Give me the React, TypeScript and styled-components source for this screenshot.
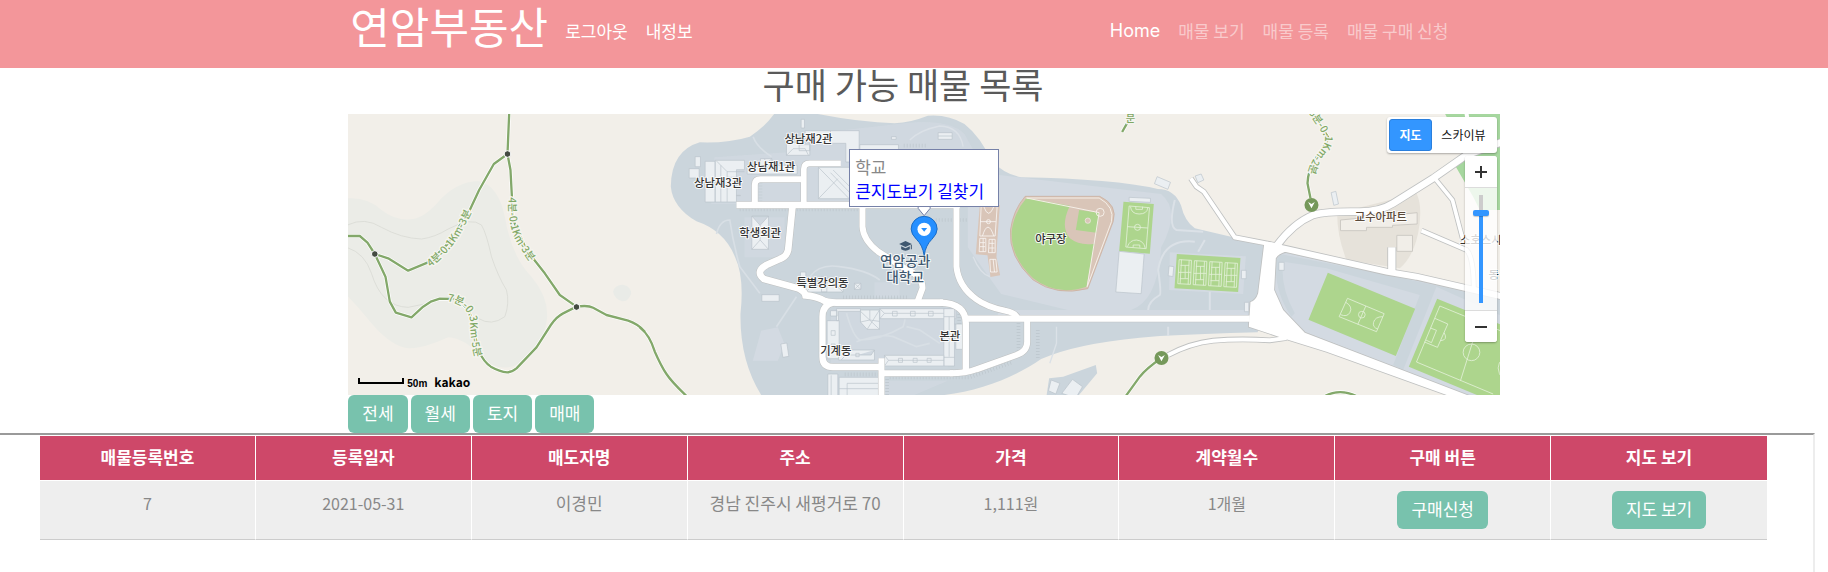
import React from 'react';
import styled, { createGlobalStyle } from 'styled-components';

const GlobalStyle = createGlobalStyle`
  *, *::before, *::after { box-sizing: border-box; }
  body {
    margin: 0;
    background: #fff;
    color: #888;
    font-family: "Noto Sans CJK KR", sans-serif;
    font-size: 17px;
    line-height: 24px;
  }
  a { text-decoration: none; }
  button { font-family: inherit; cursor: pointer; }
`;

const Page = styled.div`
  min-height: 100vh;
  display: flex;
  flex-direction: column;
`;

const Navbar = styled.nav`
  background: #f3969a;
  height: 68px;
  padding: 0 20% 0 19%;
`;

const NavInner = styled.div`
  display: flex;
  align-items: flex-start;
  padding: 0 5px 0 3px;
`;

const Brand = styled.a`
  color: #fff;
  font-size: 43px;
  line-height: 50px;
  margin-right: 8px;
`;

const NavList = styled.ul<{ $end?: boolean }>`
  list-style: none;
  display: flex;
  margin: 0 0 0 ${p => (p.$end ? 'auto' : '0')};
  padding: 19px 0 0;
`;

const NavLink = styled.a<{ $dim?: boolean; $latin?: boolean }>`
  display: block;
  padding: 0 9px;
  color: ${p => (p.$dim ? 'rgba(255, 255, 255, 0.5)' : '#fff')};
  font-family: ${p => (p.$latin ? 'Inter, sans-serif' : 'inherit')};
  font-size: ${p => (p.$latin ? 18 : 17)}px;
  white-space: nowrap;
`;

const Title = styled.h1`
  margin: 0;
  padding-right: 22px;
  height: 46px;
  text-align: center;
  color: #5a5a5a;
  font-size: 35px;
  font-weight: 400;
  line-height: 32px;
`;

const MapBox = styled.section`
  position: relative;
  margin-left: calc(19% + 1px);
  width: 63%;
  height: 281px;
  overflow: hidden;
  background: #f2efe9;
`;

const MapSvg = styled.svg`
  display: block;
  width: 100%;
  height: 100%;
`;

const MapText = styled.text<{ $tone: string; $big?: boolean }>`
  fill: ${p => p.$tone};
  stroke: rgba(255, 255, 255, 0.85);
  stroke-width: 6px;
  stroke-linejoin: round;
  paint-order: stroke;
  font-size: ${p => (p.$big ? 41 : 34)}px;
  font-weight: 500;
  text-anchor: middle;
`;

const TrailText = styled.text`
  fill: #7fa865;
  stroke: #f5f4ee;
  stroke-width: 8px;
  paint-order: stroke;
  font-size: 31px;
  font-weight: 500;
`;

const InfoWindow = styled.div`
  position: absolute;
  left: 50%;
  top: 35px;
  width: 150px;
  height: 58px;
  margin-left: -75px;
  padding: 5px;
  background: #fff;
  border: 1px solid #7681a8;
  white-space: nowrap;
  a { color: #00f; }
`;

const TypeSwitch = styled.div`
  position: absolute;
  right: 3px;
  top: 3px;
  display: flex;
  width: 110px;
  height: 36px;
  padding: 2px;
  background: #fff;
  border-radius: 3px;
  box-shadow: 0 1px 2px rgba(0, 0, 0, 0.3);
`;

const TypeButton = styled.button<{ $active?: boolean }>`
  flex: ${p => (p.$active ? '0 0 43px' : '1')};
  padding: 0;
  border: ${p => (p.$active ? '1px solid #2a7fdd' : '0')};
  border-radius: 3px;
  background: ${p => (p.$active ? '#3396ff' : '#fff')};
  color: ${p => (p.$active ? '#fff' : '#111')};
  font-size: 12px;
  line-height: 16px;
  font-weight: ${p => (p.$active ? 700 : 400)};
`;

const ZoomControl = styled.div`
  position: absolute;
  right: 3px;
  top: 42px;
  width: 32px;
  height: 186px;
  display: flex;
  flex-direction: column;
  border-radius: 3px;
  overflow: hidden;
  background: rgba(255, 255, 255, 0.8);
  box-shadow: 0 1px 2px rgba(0, 0, 0, 0.3);
`;

const ZoomButton = styled.button`
  height: 31px;
  padding: 0;
  border: 0;
  background: #fff;
  display: flex;
  align-items: center;
  justify-content: center;
`;

const ZoomTrack = styled.div`
  flex: 1;
  display: flex;
  justify-content: center;
  align-items: center;
  border: solid #dcdcdc;
  border-width: 1px 0;
`;

const ZoomRange = styled.input`
  appearance: none;
  writing-mode: vertical-lr;
  direction: rtl;
  width: 16px;
  height: 108px;
  margin: 0;
  background: linear-gradient(#ccc 18px, #3396ff 18px) center / 4px 100% no-repeat;
  &::-webkit-slider-thumb {
    appearance: none;
    width: 16px;
    height: 6px;
    border-radius: 2px;
    background: #3396ff;
    box-shadow: 0 1px 1px rgba(0, 0, 0, 0.2);
  }
`;

const MapCredit = styled.div`
  position: absolute;
  left: 10px;
  bottom: 4px;
  display: flex;
  align-items: flex-end;
  gap: 3px;
  color: #000;
  font-size: 12px;
  line-height: 18px;
  font-weight: 700;
`;

const ScaleBar = styled.span`
  width: 46px;
  height: 6px;
  margin-bottom: 7px;
  border: solid #000;
  border-width: 0 2px 2px;
`;

const ScaleText = styled.span`
  font-family: "Liberation Sans", sans-serif;
  font-size: 10px;
  line-height: 14px;
  margin-right: 4px;
`;

const Filters = styled.div`
  margin-left: calc(19% + 1px);
  display: flex;
  gap: 3px;
`;

const Button = styled.button`
  height: 38px;
  padding: 0 14px 2px;
  border: 0;
  border-radius: 6px;
  background: #78c2ad;
  color: #fff;
  font-size: 17px;
  line-height: 24px;
`;

const Frame = styled.main`
  flex: 1;
  margin-right: 13px;
  padding: 1px 46px 32px 40px;
  border: solid;
  border-width: 2px 2px 0 0;
  border-color: #9a9a9a #ededed;
`;

const Table = styled.table`
  width: 100%;
  table-layout: fixed;
  border-collapse: separate;
  border-spacing: 0;
  text-align: center;
  th, td { border-right: 1px solid #fff; }
  th:last-child, td:last-child { border-right: 0; }
`;

const HeadCell = styled.th`
  height: 45px;
  padding: 0 0 2px;
  background: #ce4869;
  border-bottom: 1px solid #fff;
  color: #fff;
  font-weight: 700;
`;

const Cell = styled.td<{ $numeric?: boolean }>`
  height: 59px;
  padding: 10px 0;
  vertical-align: top;
  background: #eee;
  border-bottom: 1px solid #ccc;
  font-size: ${p => (p.$numeric ? 16 : 17)}px;
`;

/* Map drawing: three units per screen pixel, split into tiles by origin. */
const TILE = {
  west: 'translate(-9 -12)',
  campus: 'translate(876 -12)',
  centre: 'translate(1476 -12)',
  sports: 'translate(2196 -12)',
  east: 'translate(2736 -12)',
};
type Tile = keyof typeof TILE;

const roads: [Tile, number, string][] = [
  ['campus', 20, 'M290 285H960'],
  ['campus', 18, 'M345 285V225Q345 208 362 208H490'],
  ['campus', 17, 'M603 160H510Q492 160 492 178V285'],
  ['campus', 20, 'M458 290L445 420Q440 440 420 447L380 465Q345 485 372 507L475 535Q495 545 497 556Q525 558 545 568Q560 578 590 578H910'],
  ['campus', 18, 'M668 290V350Q670 390 715 425L795 475Q850 500 848 535L832 578'],
  ['campus', 19, 'M580 578Q548 585 548 620V740Q548 771 580 771H725'],
  ['campus', 18, 'M725 745V860M725 790H940'],
  ['centre', 19, 'M300 578Q378 580 378 640V784'],
  ['centre', 18, 'M330 790Q380 790 410 778L530 735Q562 724 562 696V630'],
  ['centre', 18, 'M350 290V470Q356 530 410 568Q440 590 495 602Q528 608 534 626'],
  ['centre', 19, 'M380 626H1230'],
  ['sports', 12, 'M333 205L350 230L372 245L465 382L590 406'],
  ['sports', 12, 'M265 735Q330 700 400 692Q480 685 570 691L620 684'],
  ['east', 18, 'M20 404L70 415L380 485L470 500L730 560'],
  ['east', 20, 'M50 408Q100 340 160 315Q200 303 300 305Q360 305 400 280L520 205L620 135L730 95'],
  ['east', 11, 'M525 205L578 270L612 400'],
  ['east', 12, 'M485 362L620 420Q642 440 642 545'],
  ['east', 22, 'M396 412V490'],
];

const junction = 'M553 403L535 550Q528 572 512 576L507 650L605 683L740 725L1120 862L1180 862L675 668L610 600L583 540L588 445Q595 430 625 424Z';

const trails: [Tile, string][] = [
  ['west', 'M493 12L488 132L447 162L403 240L375 300L310 400L255 455L190 482L130 445L90 432'],
  ['west', 'M488 132L497 180L505 330L545 420L600 490L645 555L695 590'],
  ['west', 'M8 378H45L68 398L90 432L122 500L135 575L153 608L200 622L235 590L260 574L285 566L330 567Q380 590 390 660Q395 740 438 770Q465 785 487 787Q500 787 515 775L575 712L618 645Q635 620 655 610L695 590Q730 585 745 593L785 615L850 632Q880 642 900 665'],
  ['campus', 'M0 652Q30 675 45 725Q65 770 80 792Q95 815 140 858'],
  ['sports', 'M245 744Q200 775 180 800L138 858'],
  ['sports', 'M150 25L127 66'],
  ['east', 'M160 10L207 85L165 150Q145 180 143 220L152 265'],
  ['east', 'M195 858Q240 835 290 858'],
];

const halls: Record<'campus' | 'centre' | 'sports' | 'east', string[]> = {
  campus: [
    'M166 140h16v30h-16zM148 176h30v28h-30zM196 154h30v122h-30zM226 151h88v28h-24v78h12v-1h-12v20h-64z',
    'M228 151L262 185V276M243 166V276M262 202H290M262 185H314',
    'M484 28h10v26h-10zM440 98h70v38h-70zM496 62h162v94h-40v-56h-122zM572 62v38M478 104h32v18h-32zM440 136l20-20h36l10 20',
    'M322 166h150v26h-150zM362 146h34v26h-34zM372 146l24 22M396 146l-24 22M660 104h116v26h-116z',
    'M536 172h110v94h-110zM536 172l92 94M536 266l58-60M580 180l60 60M572 188l60 62',
    'M336 318h50v100h-50zM336 318l25 28l25-28M336 418l25-28l25 28M361 346v44',
    'M366 554h52v20h-52zM423 702l18-3l6 40l-18 3z',
    'M482 486h16v30h-16zM498 516h112v30h-112zM498 546l20-20h70l22 20M545 500h16v46h-16zM644 520h19v18h-19zM644 520l19 18M663 520l-19 18',
    'M572 602h20v16h-20zM590 596h72v8h-66v28h-6zM562 632h36v114h-36zM574 662h12v14h-12zM574 702h12v14h-12z',
    'M596 720h108v30h-108zM604 750l14-15h76l10-15M648 730h10v10h-10z',
    'M662 600h57v58h-37l-20-22zM662 604l57 54M719 600l-37 58M690 600v30M662 636l28-6l29 4',
    'M564 792h30v66h-30zM574 796v62M598 802h118v56h-118zM622 820h94M622 820v38M598 836h118',
  ],
  centre: [
    'M120 596h228v30h-228zM120 596l14 14l-14 16M134 610h180M158 604h14v14h-14zM212 604h14v14h-14zM266 604h14v14h-14z',
    'M312 596h32v172h-32zM344 642h24v76h-20v-76M312 620h32M312 742h32M328 620v120',
    'M134 736h178v32h-178zM134 736l12 15l-12 17M146 751h166M176 745h12v12h-12zM220 745h12v12h-12zM262 745h12v12h-12z',
    'M295 68h42v20h-42zM295 78h42M155 80h14v8h-14z',
    'M634 810l26 10l-12 32l-22-10zM698 808l30 22l-20 34l-42-14z',
  ],
  sports: [
    'M148 262l64 3v12l-64-3zM118 424l75 8l-9 119l-76-5z',
    'M268 468l14 2l-3 30l-14-3zM485 481h14v25h-14zM494 577h13v28h-13zM597 457h16v24h-16z',
    'M232 200l40 17l-8 21l-40-17zM346 198l18-6l8 18l-18 8z',
  ],
  east: ['M214 248l14-4l8 38l-14 4z'],
};

const hatches: [Tile, string][] = [
  ['campus', 'M300 298h360'],
  ['campus', 'M362 218v56'],
  ['campus', 'M610 562h198'],
  ['campus', 'M615 793h100'],
  ['campus', 'M742 808v50'],
  ['centre', 'M192 107h66'],
  ['centre', 'M288 330h98'],
  ['centre', 'M358 604v40'],
  ['centre', 'M536 640v86'],
  ['centre', 'M594 660v86'],
  ['centre', 'M150 802h240l130-46'],
];

const Marker = ({ x, y }: { x: number; y: number }) => (
  <g transform={`translate(${x} ${y})`}>
    <circle r="21" fill="#75985a" />
    <path d="M-10 -9L0 -3L10 -9L0 10Z" fill="#fff" />
  </g>
);

const CampusMap = () => (
  <MapSvg viewBox="0 0 3456 843" preserveAspectRatio="xMidYMid slice" role="img" aria-label="연암공과대학교 주변 지도">
    <rect x="-2000" width="8000" height="843" fill="#f2efe9" />
    <g transform={TILE.west}>
      <path fill="#ebece7" d="M-2000 265H10Q70 262 110 300Q150 332 200 328Q240 325 290 265Q340 215 400 213Q460 225 480 320Q500 440 560 500Q610 560 607 620Q600 700 540 750Q470 800 410 740Q360 685 310 682Q240 715 190 715Q140 710 80 640Q40 590 10 560H-2000Z" />
      <path fill="#e9ebe7" d="M805 545Q808 525 835 524Q860 530 859 552Q850 575 832 574Q808 565 805 545Z" />
      <path fill="none" stroke="#d5d6d0" strokeWidth="2" d="M8 345Q60 320 110 352Q170 385 230 387Q270 382 310 357Q380 320 410 345Q425 370 440 440Q460 500 485 540Q495 580 480 620Q440 650 400 625M8 413Q60 430 80 490Q110 590 190 592Q240 585 285 566" />
    </g>
    {/* campus grounds */}
    <path fill="#cbd5dc" d="M1279 0Q1250 40 1206 68Q1140 88 1056 85Q970 110 969 218Q975 280 1046 322Q1130 350 1162 430Q1190 490 1178 600Q1176 740 1240 843H1790C1900 830 2000 790 2080 735Q2180 690 2376 671L2436 666Q2560 660 2730 655L2750 395L2656 370L2541 343Q2510 320 2500 275Q2480 225 2430 225Q2300 195 2020 190Q1970 180 1930 140Q1900 70 1850 30Q1800 0 1740 5Q1690 25 1640 28Q1540 25 1410 0Z" />
    <g fill="#d3dae2">
      <path d="M1384 60L1650 30Q1800 10 1850 60L1900 150L1940 270H1384ZM1100 130L1384 110V270H1090Z" opacity="0.6" />
      <path d="M1930 180L2440 240Q2500 290 2440 400Q2430 560 2350 588H2160L1960 540L1860 400V260Z" />
      <path d="M2466 415L2694 427L2686 540L2464 528ZM2200 588H2700V604H1950V588ZM1240 650L1290 640L1310 690L1290 740L1215 740Z" />
      <path d="M1190 310H1310V430H1190ZM1580 505H1655V550H1580ZM1450 590H1800V760H1450ZM1590 800H1800L1700 843H1590Z" opacity="0.6" />
    </g>
    <g transform={TILE.campus} fill="none" stroke="#d8dfe5" strokeWidth="5">
      <path d="M230 372Q240 330 270 330Q280 400 300 470L360 550M470 560L410 650M510 500Q540 460 600 470Q680 480 720 510M340 80Q350 110 395 140" />
      <path d="M620 610Q640 680 660 690Q720 690 790 650Q800 620 795 600M800 650L840 660L900 700M650 695Q720 670 760 680L830 710L870 700" />
    </g>
    <g transform={TILE.sports} fill="none" stroke="#dbe1e7" strokeWidth="6">
      <path d="M285 270Q265 350 290 360L370 365M345 395Q250 385 235 480Q245 550 240 555Q205 575 205 600M390 545V600M375 390L355 425M265 650V678" />
    </g>
    <g transform={TILE.centre}>
      <path fill="#cbd5dc" d="M620 858L628 805L670 800L768 765L772 790L715 858Z" />
      <path fill="none" stroke="#dbe1e7" strokeWidth="4" d="M210 90Q240 60 300 48Q360 50 370 110M400 440Q420 490 450 500M650 650V700L630 760" />
    </g>
    <g transform={TILE.east}>
      <path fill="#a6d79f" d="M555 10H5000V300H660L640 260L585 165L615 130Z" />
      <path fill="none" stroke="#fff" strokeWidth="12" d="M620 10L640 130" />
      <path fill="#e6e2da" d="M232 310L470 250Q490 290 475 370Q460 440 420 475L260 450Q232 380 232 310Z" />
      <path fill="#d3dae2" stroke="#c3c7c8" strokeWidth="2" d="M46 440Q60 425 80 428L380 490L730 568V900L135 667Q40 580 43 530Z" />
      <path fill="#cbd5dc" d="M60 432L380 494L730 570V620L530 530L430 780L400 765L480 555L200 475L70 455Q60 530 105 610L95 620Q40 540 50 450Z" />
      <path fill="#f1eee8" stroke="#cdcac4" strokeWidth="3" d="M242 330L472 308V342L398 346V352H320V362H242ZM411 376H458V424H411Z" />
    </g>

    {/* playing fields */}
    <g transform={TILE.centre}>
      <path fill="#d9c5b8" d="M420 285H480L472 400L470 442L481 496L452 501L443 436L408 433Z" />
      <g fill="none" stroke="#fff" strokeWidth="2.5" opacity="0.85">
        <path d="M424 290H472L466 378H420ZM421 335H468M432 290Q446 330 462 290M428 378Q444 325 462 378M420 385h18v40h-20zM448 388h18v40h-20zM450 448h18l4 38h-20zM420 398h16M420 410h16M448 400h16M448 414h16M430 385v40M457 388v40M460 448l4 38" />
        <circle cx="446" cy="335" r="6" />
      </g>
      <path fill="#d9c5b8" stroke="#c9ab99" strokeWidth="2" d="M556 259H780Q835 285 820 335L744 536Q650 560 580 510Q505 440 512 360Q520 300 556 259Z" />
      <path fill="#add58d" d="M560 264L690 287Q660 350 690 385Q720 408 764 401L740 530Q650 560 580 505Q510 440 516 360Q524 305 560 264Z" />
      <path fill="#add58d" d="M718 300L778 308L770 368L708 360Z" />
      <g fill="none" stroke="#f5efe8" strokeWidth="3">
        <path d="M560 264H778Q825 290 815 335L742 530L778 308L560 264" />
        <circle cx="781" cy="307" r="12" />
      </g>
      <circle cx="744" cy="332" r="8" fill="#d9c5b8" stroke="#f5efe8" strokeWidth="2" />
    </g>
    <g transform={TILE.sports}>
      <path fill="#add58d" d="M131 275L222 282L210 431L118 423ZM291 432L482 444L475 546L284 535Z" />
      <g fill="none" stroke="#e3f0d8" strokeWidth="2.5">
        <path d="M148 288L209 293L199 416L138 411ZM143 350L204 354M152 290Q155 312 178 312Q202 312 204 293M143 410Q150 390 170 390Q192 392 196 414M168 290v8h20v-8M160 412v-7h20v8" />
        <circle cx="173" cy="352" r="9" />
        {[298, 344, 390, 436].map((x, i) => (
          <path key={x} transform={`translate(${x} ${449 + i * 3})`} d="M0 0L37 2L34 74L-4 72ZM7 0L3 72M30 2L27 74M4 17H30M-2 38H36M2 57H28M18 17V57" />
        ))}
      </g>
    </g>
    <g transform={TILE.east}>
      <path fill="#add58d" d="M204 488L466 596L408 738L146 629ZM532 566L1000 757V1000L447 770Z" />
      <g fill="none" stroke="#e3f0d8" strokeWidth="2.5">
        <path d="M263 565L373 611L350 665L238 620ZM318 588L294 643M258 577Q280 590 270 608Q262 622 242 614M369 620Q345 620 341 638Q338 652 354 657" />
        <circle cx="306" cy="614" r="10" />
        <path d="M540 588L800 694M540 588L470 756L700 852M525 625L564 642L533 712L494 696M512 654L530 661L515 698L498 690M553 668Q565 690 543 692M656 640L602 812M730 745Q700 770 730 810" />
        <circle cx="635" cy="727" r="25" />
      </g>
    </g>

    {(Object.keys(halls) as (keyof typeof halls)[]).map(tile => (
      <g key={tile} transform={TILE[tile]} fill="#ebeff2" stroke="#bac3ca" strokeWidth="2">
        {halls[tile].map(d => <path key={d} d={d} />)}
      </g>
    ))}
    {hatches.map(([tile, d]) => (
      <path key={tile + d} transform={TILE[tile]} d={d} fill="none" stroke="#bcc5cb" strokeWidth="11" strokeDasharray="2 7" />
    ))}

    {/* roads: casing first, then the surface */}
    <g fill="none" stroke="#bfc1c1">
      {roads.map(([tile, w, d]) => (
        <path key={d} transform={TILE[tile]} d={d} strokeWidth={w + (tile === 'east' || tile === 'sports' ? 5 : 3)} />
      ))}
      <path transform={TILE.sports} d={junction} strokeWidth="5" />
    </g>
    <g fill="none" stroke="#fff">
      {roads.map(([tile, w, d]) => (
        <path key={d} transform={TILE[tile]} d={d} strokeWidth={w} />
      ))}
      <path transform={TILE.sports} d={junction} fill="#fff" stroke="none" />
    </g>

    {/* walking trails */}
    {['#fff', '#83a86a'].map((color, i) => (
      <g key={color} fill="none" stroke={color} strokeWidth={i ? 7 : 11} strokeLinejoin="round">
        {trails.map(([tile, d]) => <path key={d} transform={TILE[tile]} d={d} />)}
      </g>
    ))}
    <g transform={TILE.west}>
      <path id="trail-a" fill="none" d="M258 472Q310 430 345 375Q375 320 405 250" />
      <path id="trail-b" fill="none" d="M492 262Q488 345 515 395Q550 455 612 525" />
      <path id="trail-c" fill="none" d="M308 574Q365 580 376 630Q374 700 402 780" />
      <TrailText><textPath href="#trail-a">4분-0.1Km-3분</textPath></TrailText>
      <TrailText><textPath href="#trail-b">4분-0.1Km-3분</textPath></TrailText>
      <TrailText><textPath href="#trail-c">7분-0.3Km-5분</textPath></TrailText>
      {[[488, 132], [90, 432], [695, 591]].map(([x, y]) => (
        <circle key={x} cx={x} cy={y} r="10" fill="#444b42" stroke="#fff" strokeWidth="3" />
      ))}
    </g>
    <g transform={TILE.east}>
      <path id="trail-d" fill="none" d="M146 8Q180 55 196 85Q195 110 165 140Q145 170 135 235" />
      <TrailText><textPath href="#trail-d">5분-0.1Km-2분</textPath></TrailText>
      <Marker x={155} y={285} />
    </g>
    <g transform={TILE.sports}>
      <TrailText x="138" y="36">분</TrailText>
      <Marker x={245} y={744} />
    </g>

    <g transform={TILE.campus}>
      <MapText $tone="#333" x="506" y="98">상남재2관</MapText>
      <MapText $tone="#333" x="394" y="182">상남재1관</MapText>
      <MapText $tone="#333" x="235" y="230">상남재3관</MapText>
      <MapText $tone="#333" x="361" y="380">학생회관</MapText>
      <MapText $tone="#333" x="548" y="531">특별강의동</MapText>
      <MapText $tone="#333" x="588" y="734">기계동</MapText>
    </g>
    <g transform={TILE.centre}>
      <MapText $tone="#333" x="633" y="398">야구장</MapText>
      <MapText $tone="#333" x="330" y="689">본관</MapText>
      <MapText $tone="#3f5870" $big x="196" y="468">연암공과</MapText>
      <MapText $tone="#3f5870" $big x="196" y="515">대학교</MapText>
      <path fill="#3f5870" d="M178 402L197 393L216 402L197 411ZM184 409L197 415L210 409V418Q197 426 184 418ZM213 404V418H216V404Z" />
    </g>
    <g transform={TILE.east}>
      <MapText $tone="#5b4a3a" x="363" y="332">교수아파트</MapText>
      <MapText $tone="#333" x="663" y="402">소호스시</MapText>
      <MapText $tone="#333" x="702" y="508">동</MapText>
    </g>

    {/* location pin */}
    <g transform={TILE.centre}>
      <path fill="#258fff" stroke="#1b6cc4" strokeWidth="3" d="M253 436Q248 405 230 388Q214 372 214 357A39 38 0 0 1 292 357Q292 372 276 388Q258 405 253 436Z" />
      <circle cx="253" cy="358" r="20" fill="#fff" />
      <path fill="#258fff" d="M244 354H262L253 365Z" />
      <path fill="#fff" stroke="#7681a8" strokeWidth="3" d="M235 288V295L253 317L271 295V288Z" />
    </g>
  </MapSvg>
);

const headers = ['매물등록번호', '등록일자', '매도자명', '주소', '가격', '계약월수', '구매 버튼', '지도 보기'];
const rows = [
  { id: '7', date: '2021-05-31', seller: '이경민', address: '경남 진주시 새평거로 70', price: '1,111원', term: '1개월' },
];

export default function App() {
  return (
    <Page>
      <GlobalStyle />
      <Navbar>
        <NavInner>
          <Brand href="#">연암부동산</Brand>
          <NavList>
            <li><NavLink href="#">로그아웃</NavLink></li>
            <li><NavLink href="#">내정보</NavLink></li>
          </NavList>
          <NavList $end>
            <li><NavLink href="#" $latin>Home</NavLink></li>
            <li><NavLink href="#" $dim>매물 보기</NavLink></li>
            <li><NavLink href="#" $dim>매물 등록</NavLink></li>
            <li><NavLink href="#" $dim>매물 구매 신청</NavLink></li>
          </NavList>
        </NavInner>
      </Navbar>
      <Title>구매 가능 매물 목록</Title>
      <MapBox>
        <CampusMap />
        <InfoWindow>
          <div>학교</div>
          <div><a href="#">큰지도보기</a> <a href="#">길찾기</a></div>
        </InfoWindow>
        <TypeSwitch>
          <TypeButton type="button" $active>지도</TypeButton>
          <TypeButton type="button">스카이뷰</TypeButton>
        </TypeSwitch>
        <ZoomControl>
          <ZoomButton type="button" aria-label="확대">
            <svg width="12" height="12"><path d="M0 6H12M6 0V12" stroke="#333" strokeWidth="2" /></svg>
          </ZoomButton>
          <ZoomTrack>
            <ZoomRange type="range" min="0" max="100" defaultValue="85" aria-label="지도 확대 수준" />
          </ZoomTrack>
          <ZoomButton type="button" aria-label="축소">
            <svg width="12" height="12"><path d="M0 6H12" stroke="#333" strokeWidth="2" /></svg>
          </ZoomButton>
        </ZoomControl>
        <MapCredit>
          <ScaleBar />
          <ScaleText>50m</ScaleText>
          <span>kakao</span>
        </MapCredit>
      </MapBox>
      <Filters>
        {['전세', '월세', '토지', '매매'].map(kind => <Button key={kind} type="button">{kind}</Button>)}
      </Filters>
      <Frame>
        <Table>
          <thead>
            <tr>{headers.map(h => <HeadCell key={h} scope="col">{h}</HeadCell>)}</tr>
          </thead>
          <tbody>
            {rows.map(r => (
              <tr key={r.id}>
                <Cell $numeric>{r.id}</Cell>
                <Cell $numeric>{r.date}</Cell>
                <Cell>{r.seller}</Cell>
                <Cell>{r.address}</Cell>
                <Cell $numeric>{r.price}</Cell>
                <Cell $numeric>{r.term}</Cell>
                <Cell><Button type="button">구매신청</Button></Cell>
                <Cell><Button type="button">지도 보기</Button></Cell>
              </tr>
            ))}
          </tbody>
        </Table>
      </Frame>
    </Page>
  );
}
